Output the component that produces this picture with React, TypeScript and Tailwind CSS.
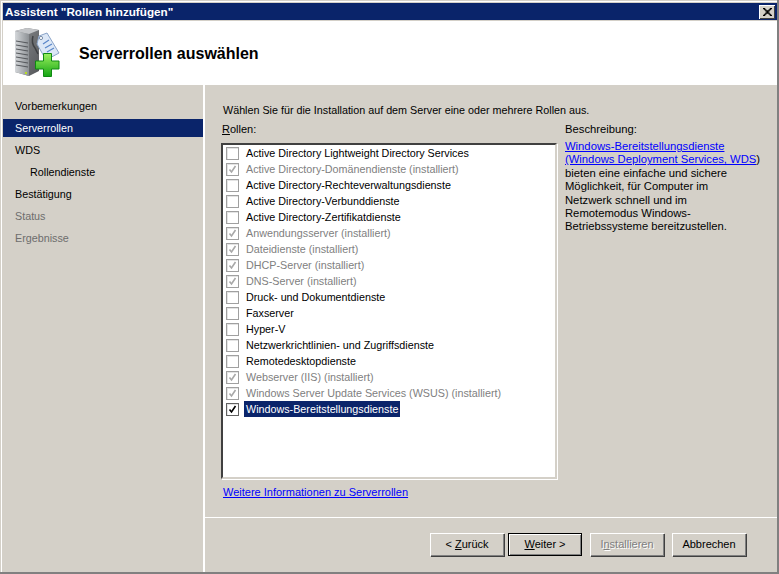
const roles = [
  { label: "Active Directory Lightweight Directory Services" },
  { label: "Active Directory-Domänendienste (installiert)", installed: true },
  { label: "Active Directory-Rechteverwaltungsdienste" },
  { label: "Active Directory-Verbunddienste" },
  { label: "Active Directory-Zertifikatdienste" },
  { label: "Anwendungsserver (installiert)", installed: true },
  { label: "Dateidienste (installiert)", installed: true },
  { label: "DHCP-Server (installiert)", installed: true },
  { label: "DNS-Server (installiert)", installed: true },
  { label: "Druck- und Dokumentdienste" },
  { label: "Faxserver" },
  { label: "Hyper-V" },
  { label: "Netzwerkrichtlinien- und Zugriffsdienste" },
  { label: "Remotedesktopdienste" },
  { label: "Webserver (IIS) (installiert)", installed: true },
  { label: "Windows Server Update Services (WSUS) (installiert)", installed: true },
  { label: "Windows-Bereitstellungsdienste", selected: true },
];

const navItems = [
  { label: "Vorbemerkungen" },
  { label: "Serverrollen", active: true },
  { label: "WDS" },
  { label: "Rollendienste", indent: true },
  { label: "Bestätigung" },
  { label: "Status", muted: true },
  { label: "Ergebnisse", muted: true },
];

function ServerIcon() {
  return (
    <svg width="50" height="54" viewBox="0 0 50 54">
      <defs>
        <linearGradient id="front" x1="0" y1="0" x2="1" y2="0">
          <stop offset="0" stopColor="#d4d7da" />
          <stop offset="1" stopColor="#8d9195" />
        </linearGradient>
        <linearGradient id="side" x1="0" y1="0" x2="1" y2="1">
          <stop offset="0" stopColor="#8a8c8f" />
          <stop offset="1" stopColor="#55575a" />
        </linearGradient>
        <linearGradient id="plus" x1="0" y1="0" x2="0" y2="1">
          <stop offset="0" stopColor="#9cf05e" />
          <stop offset="1" stopColor="#14a514" />
        </linearGradient>
      </defs>
      <path d="M3 5 L15 2 L27 4 L27 45 L17 50 L3 46 Z" fill="url(#side)" />
      <path d="M3 5 L17 8 L17 50 L3 46 Z" fill="url(#front)" />
      <path d="M3 5 L15 2 L27 4 L17 8 Z" fill="#c3c5c8" />
      <path d="M4 15 L16 17 M4 19 L16 21 M4 23 L16 25 M4 27 L16 29 M4 31 L16 33 M4 35 L16 37 M4 39 L16 41" stroke="#55585c" strokeWidth="1" />
      <rect x="13" y="46" width="2" height="2" fill="#b8e020" />
      <path d="M21 10 Q19 17 23 22 L26 28" fill="none" stroke="#3f4144" strokeWidth="1.5" />
      <path d="M27 10 L35 7 L47 27 L34 34 L25 18 Z" fill="#dce7f6" stroke="#8ba4c8" />
      <circle cx="29" cy="12" r="1.6" fill="#fff" stroke="#7b8ea8" />
      <path d="M31 18 L37 14 M33 22 L40 18 M35 26 L42 22" stroke="#5a86c8" strokeWidth="1.2" />
      <path d="M31.5 27.5 H39.5 V35 H47 V43 H39.5 V50.5 H31.5 V43 H23.5 V35 H31.5 Z" fill="url(#plus)" stroke="#0f8a12" />
    </svg>
  );
}

function Button({ children, isDefault, disabled, className = "" }: { children: React.ReactNode; isDefault?: boolean; disabled?: boolean; className?: string }) {
  return (
    <button
      disabled={disabled}
      className={
        "w-[74px] h-[23px] bg-[#d4d0c8] text-center " +
        (isDefault
          ? "border border-black shadow-[inset_1px_1px_0_#fff,inset_-1px_-1px_0_#808080] "
          : "shadow-[inset_1px_1px_0_#fff,inset_-1px_-1px_0_#808080,1px_1px_0_#404040] ") +
        (disabled ? "text-[#808080] [text-shadow:1px_1px_0_#fff] " : "text-black ") +
        className
      }
    >
      {children}
    </button>
  );
}

export default function App() {
  return (
    <div className="w-[779px] h-[574px] flex flex-col overflow-hidden bg-[#d4d0c8] border-r-2 border-b-2 border-r-[#808080] border-b-[#808080] pl-[3px] pt-[3px] shadow-[inset_1px_1px_0_#d4d0c8,inset_2px_2px_0_#fff] text-[11px] leading-[13px] text-black font-['Liberation_Sans',sans-serif]">
      {/* title bar */}
      <div className="h-[17px] shrink-0 bg-[#0a246a] flex items-center justify-between pl-[2px] pr-[2px]">
        <span className="font-bold text-[11.7px] text-white">Assistent "Rollen hinzufügen"</span>
        <div className="w-[16px] h-[14px] bg-[#d4d0c8] shadow-[inset_1px_1px_0_#fff,inset_-1px_-1px_0_#404040] flex items-center justify-center">
          <svg width="9" height="8" viewBox="0 0 8 7">
            <path d="M0 0h2v1h1v1h2V1h1V0h2v1H7v1H6v1H5v1h1v1h1v1h1v1H6V6H5V5H3v1H2v1H0V6h1V5h1V4h1V3H2V2H1V1H0z" fill="#000" />
          </svg>
        </div>
      </div>

      {/* header */}
      <div className="h-[64px] mt-px shrink-0 bg-white flex items-center">
        <div className="ml-[9px] self-start mt-[5px]">
          <ServerIcon />
        </div>
        <h1 className="ml-[17px] mt-[2px] text-[16px] leading-[20px] font-bold">Serverrollen auswählen</h1>
      </div>

      <div className="flex-1 flex min-h-0">
        {/* sidebar */}
        <nav className="w-[200px] shrink-0 pt-[12px] flex flex-col text-[10.75px]">
          {navItems.map((item) => (
            <div
              key={item.label}
              className={
                "h-[18px] mb-[4px] flex items-center " +
                (item.indent ? "pl-[27px] " : "pl-[12px] ") +
                (item.active ? "bg-[#0a246a] text-white " : "") +
                (item.muted ? "text-[#6d6d6d]" : "")
              }
            >
              {item.label}
            </div>
          ))}
        </nav>
        <div className="w-[2px] shrink-0 bg-white" />

        {/* content */}
        <div className="flex-1 flex flex-col min-w-0">
          <div className="flex-1 pl-[16px] pt-[19px]">
            <p className="pl-[2px] text-[10.75px]">Wählen Sie für die Installation auf dem Server eine oder mehrere Rollen aus.</p>
            <div className="flex mt-[6px]">
              <div className="w-[336px] shrink-0">
                <div className="pl-px mb-[7px]"><u>R</u>ollen:</div>
                <div className="h-[336px] bg-white border-2 border-t-[#404040] border-l-[#404040] border-r-[#d4d0c8] border-b-[#d4d0c8] shadow-[1px_1px_0_#fff] text-[10.75px]">
                  {roles.map((role) => (
                    <div key={role.label} className="h-[16px] flex items-center pl-[3px]">
                      <span className={"w-[13px] h-[13px] shrink-0 bg-white flex items-center justify-center border shadow-[inset_1px_1px_0_#e4e4e4] " + (role.selected ? "border-[#606060]" : "border-[#a0a0a0]")}>
                        {(role.installed || role.selected) && (
                          <svg width="9" height="9" viewBox="0 0 9 9">
                            <path d="M1.5 4.5 L3.5 7 L7.5 1" fill="none" stroke={role.selected ? "#000" : "#a8a8a8"} strokeWidth="1.6" />
                          </svg>
                        )}
                      </span>
                      <span className={"ml-[5px] px-[2px] h-[16px] flex items-center whitespace-nowrap " + (role.selected ? "bg-[#0a246a] text-white" : role.installed ? "text-[#808080]" : "")}>
                        {role.label}
                      </span>
                    </div>
                  ))}
                </div>
                <a className="block mt-[7px] ml-[2px] text-[#0000ff] underline">Weitere Informationen zu Serverrollen</a>
              </div>
              <div className="ml-[8px] w-[200px] text-[11.25px]">
                <div className="mb-[4px]">Beschreibung:</div>
                <p className="leading-[13.4px]">
                  <a className="text-[#0000ff] underline">Windows-Bereitstellungsdienste<br />(Windows Deployment Services, WDS</a>)
                  {" "}bieten eine einfache und sichere<br />Möglichkeit, für Computer im<br />Netzwerk schnell und im<br />Remotemodus Windows-<br />Betriebssysteme bereitzustellen.
                </p>
              </div>
            </div>
          </div>
          <div className="h-[55px] shrink-0 border-t border-t-white flex justify-end gap-[8px] pt-[15px] pr-[31px]">
            <Button className="mr-[-4px]">&lt; <u>Z</u>urück</Button>
            <Button isDefault><u>W</u>eiter &gt;</Button>
            <Button disabled>I<u>n</u>stallieren</Button>
            <Button>Abbrechen</Button>
          </div>
        </div>
      </div>
    </div>
  );
}
